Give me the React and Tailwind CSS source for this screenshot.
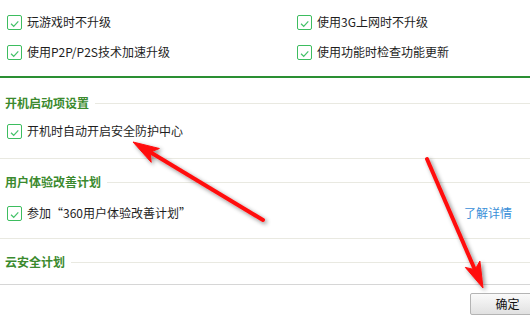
import React from "react"

const font = { fontFamily: '"Noto Sans CJK SC", "Noto Sans", sans-serif' }

const Check = () => (
  <span className="flex h-[15px] w-[15px] shrink-0 items-center justify-center rounded-[2px] border border-[#3dbd5f] bg-white">
    <svg width="15" height="15" viewBox="0 0 15 15" className="-m-px">
      <polyline points="4,8.8 6.7,11.3 11.3,6.3" fill="none" stroke="#45c36a" strokeWidth="1.2" />
    </svg>
  </span>
)

const CheckRow = ({ text, className = "" }) => (
  <label className={`flex h-[30px] items-center gap-[5px] ${className}`}>
    <Check />
    <span className="text-[12px] text-[#1e1e1e]">{text}</span>
  </label>
)

const Heading = ({ text, className = "" }) => (
  <div className={`flex h-[24px] items-center ${className}`}>
    <span className="pl-[5px] text-[12px] font-bold text-[#3b8a2e]">{text}</span>
    <div className="ml-[6px] h-px flex-1 bg-[#e9e9e1]" />
  </div>
)

// red annotation arrows drawn over the settings panel
const Arrows = () => (
  <svg className="pointer-events-none absolute left-0 top-0" width="530" height="320" viewBox="0 0 530 320">
    <defs>
      <filter id="shadow" x="-20%" y="-20%" width="140%" height="140%">
        <feDropShadow dx="2" dy="2" stdDeviation="2" floodColor="#000" floodOpacity="0.45" />
      </filter>
    </defs>
    <g filter="url(#shadow)" fill="#ff1010" stroke="#ff1010">
      <line x1="263" y1="220" x2="150" y2="152" strokeWidth="4" strokeLinecap="round" />
      <polygon points="133,142 159.4,148.5 150.1,152.3 151.2,162.3" strokeWidth="1" strokeLinejoin="round" />
      <line x1="427" y1="159" x2="475" y2="270" strokeWidth="4" strokeLinecap="round" />
      <polygon points="483,288 465.3,267.4 475,269.7 479.9,261" strokeWidth="1" strokeLinejoin="round" />
    </g>
  </svg>
)

export default function App() {
  return (
    <div className="relative h-[320px] w-[530px] overflow-hidden bg-white" style={font}>
      <div className="grid grid-cols-[290px_1fr] pl-[7px] pt-[7px]">
        <CheckRow text="玩游戏时不升级" />
        <CheckRow text="使用3G上网时不升级" />
        <CheckRow text="使用P2P/P2S技术加速升级" />
        <CheckRow text="使用功能时检查功能更新" />
      </div>
      <div className="mt-[9px] h-[2px] bg-[#2a8f33]" />

      <Heading text="开机启动项设置" className="mt-[13px]" />
      <CheckRow text="开机时自动开启安全防护中心" className="mt-px pl-[7px]" />
      <div className="mt-[12px] h-px bg-[#e9e9e1]" />

      <Heading text="用户体验改善计划" className="mt-[11px]" />
      <div className="mt-[4px] flex items-center justify-between pl-[7px] pr-[18px]">
        <CheckRow text="参加“360用户体验改善计划”" />
        <a className="text-[12px] text-[#3a8fd8]">了解详情</a>
      </div>
      <div className="mt-[10px] h-px bg-[#e9e9e1]" />

      <Heading text="云安全计划" className="mt-[11px]" />
      <div className="mt-[10px] h-px bg-[#d6d6d6]" />

      <div className="mt-[8px] flex pl-[470px]">
        <button className="h-[22px] w-[75px] shrink-0 rounded-[2px] border border-[#b4b4b4] bg-gradient-to-b from-[#fafafa] to-[#e1e1e1] text-[12px] text-[#111]">
          确定
        </button>
      </div>

      <Arrows />
    </div>
  )
}
